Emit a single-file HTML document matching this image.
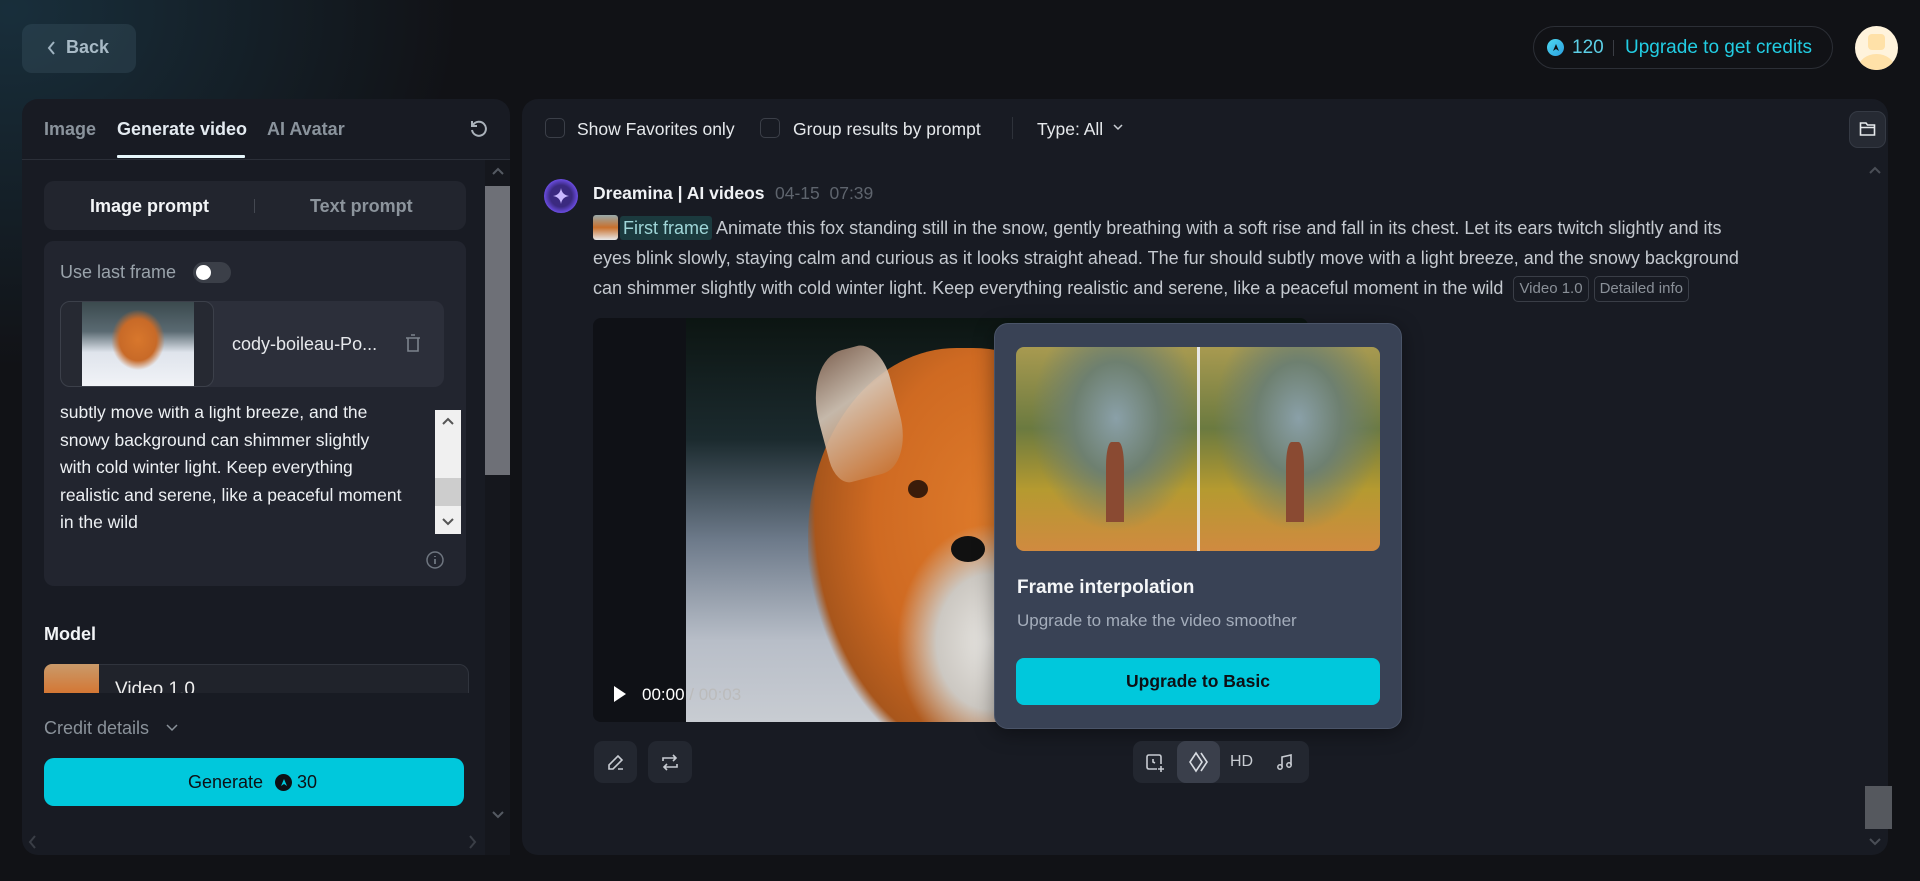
<!DOCTYPE html>
<html><head><meta charset="utf-8"><style>
*{box-sizing:border-box;margin:0;padding:0}
body{width:1920px;height:881px;overflow:hidden;background:#111216;font-family:"Liberation Sans",sans-serif;color:#e8eaee;position:relative}
.a{position:absolute}
.glow{left:-200px;top:-200px;width:700px;height:600px;background:radial-gradient(ellipse at 30% 35%,rgba(30,70,90,.55),rgba(17,18,22,0) 65%)}
.t{white-space:nowrap}
</style></head><body>
<div class="a glow"></div>
<!-- Back -->
<div class="a" style="left:22px;top:24px;width:114px;height:49px;border-radius:10px;background:rgba(60,85,100,.35)"></div>
<svg class="a" style="left:46px;top:40px" width="12" height="16" viewBox="0 0 12 16"><path d="M8 2 L3 8 L8 14" fill="none" stroke="#9fb3c0" stroke-width="2"/></svg>
<div class="a t" style="left:66px;top:37px;font-size:18px;color:#a8bac6;font-weight:bold">Back</div>

<!-- credits pill -->
<div class="a" style="left:1533px;top:26px;width:300px;height:43px;border:1px solid #2c2f36;border-radius:22px"></div>
<div class="a" style="left:1547px;top:39px;width:17px;height:17px;border-radius:50%;background:linear-gradient(135deg,#4fd9f0,#2a9fe0)"></div>
<svg class="a" style="left:1550px;top:42px" width="11" height="11"><path d="M3 9 L6 2 L9 9 L6 7Z" fill="#111"/></svg>
<div class="a t" style="left:1572px;top:37px;font-size:19px;color:#5ccfe6">120</div>
<div class="a" style="left:1613px;top:40px;width:1px;height:16px;background:#3a3d44"></div>
<div class="a t" style="left:1625px;top:37px;font-size:19px;color:#22cde3">Upgrade to get credits</div>
<div class="a" style="left:1855px;top:26px;width:43px;height:44px;border-radius:50%;background:#fff3dc;overflow:hidden">
 <div class="a" style="left:13px;top:8px;width:17px;height:16px;border-radius:4px;background:#ffe1a8"></div>
 <div class="a" style="left:3px;top:28px;width:37px;height:30px;border-radius:50%;background:#ffe1a8"></div>
</div>

<!-- LEFT PANEL -->
<div class="a" style="left:22px;top:99px;width:488px;height:756px;border-radius:16px;background:#181b23;overflow:hidden">
 <div class="a" style="left:0;top:60px;width:488px;height:1px;background:#2b2f38"></div>
</div>
<div class="a t" style="left:44px;top:119px;font-size:18px;color:#8a939c;font-weight:bold">Image</div>
<div class="a t" style="left:117px;top:119px;font-size:18px;color:#e3eaf0;font-weight:bold">Generate video</div>
<div class="a" style="left:117px;top:155px;width:128px;height:3px;background:#e6f6fb;border-radius:1px"></div>
<div class="a t" style="left:267px;top:119px;font-size:18px;color:#8a939c;font-weight:bold">AI Avatar</div>
<svg class="a" style="left:469px;top:119px" width="20" height="20" viewBox="0 0 20 20"><path d="M4 6 A7 7 0 1 1 3 11" fill="none" stroke="#aab2ba" stroke-width="2"/><path d="M3 2 V7 H8" fill="none" stroke="#aab2ba" stroke-width="2"/></svg>
<!-- scrollbar -->
<div class="a" style="left:485px;top:160px;width:25px;height:695px;background:#15171d"></div>
<svg class="a" style="left:491px;top:166px" width="14" height="10"><path d="M2 8 L7 3 L12 8" fill="none" stroke="#555a62" stroke-width="2"/></svg>
<div class="a" style="left:485px;top:186px;width:25px;height:289px;background:#6e7077"></div>
<svg class="a" style="left:491px;top:810px" width="14" height="10"><path d="M2 2 L7 7 L12 2" fill="none" stroke="#555a62" stroke-width="2"/></svg>

<div class="a" style="left:44px;top:181px;width:422px;height:49px;border-radius:10px;background:#22252e"></div>
<div class="a t" style="left:90px;top:196px;font-size:18px;color:#f2f4f6;font-weight:bold">Image prompt</div>
<div class="a" style="left:254px;top:199px;width:1px;height:14px;background:#444851"></div>
<div class="a t" style="left:310px;top:196px;font-size:18px;color:#8c949c;font-weight:bold">Text prompt</div>

<div class="a" style="left:44px;top:241px;width:422px;height:345px;border-radius:10px;background:#22252f;overflow:hidden">
 <div class="a" style="left:16px;top:158px;width:380px;font-size:17.5px;line-height:27.5px;color:#edf0f3;white-space:nowrap">subtly move with a light breeze, and the<br>snowy background can shimmer slightly<br>with cold winter light. Keep everything<br>realistic and serene, like a peaceful moment<br>in the wild</div>
 <div class="a" style="left:0;top:0;width:422px;height:165px;background:#22252f"></div>
 <div class="a t" style="left:16px;top:21px;font-size:18px;color:#9aa3ab">Use last frame</div>
 <div class="a" style="left:149px;top:21px;width:38px;height:21px;border-radius:11px;background:#3b3f48"></div>
 <div class="a" style="left:152px;top:24px;width:15px;height:15px;border-radius:50%;background:#fff"></div>
 <div class="a" style="left:16px;top:60px;width:384px;height:86px;border-radius:10px;background:#2c2f3a"></div>
 <div class="a" style="left:16px;top:60px;width:154px;height:86px;border-radius:10px;background:#262932;border:1px solid #3c404a"></div>
 <div class="a" style="left:38px;top:61px;width:112px;height:84px;background:radial-gradient(ellipse 30% 45% at 50% 45%,#d8772c 0,#c86a28 55%,rgba(0,0,0,0) 80%),linear-gradient(180deg,#3b4a4e 0,#5a6a72 35%,#dfe4ec 60%,#f1f3f7 100%)"></div>
 <div class="a t" style="left:188px;top:93px;font-size:18px;color:#e6e8ec">cody-boileau-Po...</div>
 <svg class="a" style="left:361px;top:93px" width="16" height="19" viewBox="0 0 16 19"><path d="M1 4 H15 M6 1 H10 M3 4 V17 H13 V4" fill="none" stroke="#7c838c" stroke-width="1.6"/></svg>
 <div class="a" style="left:391px;top:169px;width:26px;height:124px;background:#f0f0f0"></div>
 <div class="a" style="left:391px;top:237px;width:26px;height:28px;background:#cdcdcd"></div>
 <svg class="a" style="left:396px;top:174px" width="16" height="12"><path d="M3 9 L8 4 L13 9" fill="none" stroke="#555" stroke-width="2"/></svg>
 <svg class="a" style="left:396px;top:275px" width="16" height="12"><path d="M3 3 L8 8 L13 3" fill="none" stroke="#555" stroke-width="2"/></svg>
 <svg class="a" style="left:381px;top:309px" width="20" height="20" viewBox="0 0 20 20"><circle cx="10" cy="10" r="8" fill="none" stroke="#6f7680" stroke-width="1.5"/><path d="M10 9 V14 M10 6 V7" stroke="#6f7680" stroke-width="1.8"/></svg>
</div>
<div class="a t" style="left:44px;top:624px;font-size:18px;color:#f2f4f6;font-weight:bold">Model</div>
<div class="a" style="left:44px;top:664px;width:425px;height:29px;overflow:hidden">
 <div class="a" style="left:0;top:0;width:425px;height:50px;border:1px solid #30343d;border-radius:10px;background:#20232b"></div>
 <div class="a" style="left:0;top:0;width:55px;height:40px;border-radius:8px 0 0 0;background:linear-gradient(180deg,#c99a6a,#d86a20)"></div>
 <div class="a t" style="left:71px;top:15px;font-size:19px;color:#eee">Video 1.0</div>
</div>
<div class="a t" style="left:44px;top:718px;font-size:18px;color:#8a929a">Credit details</div>
<svg class="a" style="left:164px;top:722px" width="16" height="12"><path d="M3 3 L8 8 L13 3" fill="none" stroke="#8a929a" stroke-width="1.5"/></svg>
<div class="a" style="left:44px;top:758px;width:420px;height:48px;border-radius:10px;background:#00c8dc"></div>
<div class="a t" style="left:188px;top:772px;font-size:18px;color:#0d1015">Generate</div>
<div class="a" style="left:275px;top:774px;width:17px;height:17px;border-radius:50%;background:#0d1015"></div>
<svg class="a" style="left:278px;top:777px" width="11" height="11"><path d="M3 9 L6 2 L9 9 L6 7Z" fill="#00c8dc"/></svg>
<div class="a t" style="left:297px;top:772px;font-size:18px;color:#0d1015">30</div>
<svg class="a" style="left:27px;top:834px" width="12" height="16"><path d="M8 2 L3 8 L8 14" fill="none" stroke="#3a3e46" stroke-width="2"/></svg>
<svg class="a" style="left:466px;top:834px" width="12" height="16"><path d="M4 2 L9 8 L4 14" fill="none" stroke="#3a3e46" stroke-width="2"/></svg>

<!-- RIGHT PANEL -->
<div class="a" style="left:522px;top:99px;width:1366px;height:756px;border-radius:16px;background:#181b23"></div>
<div class="a" style="left:545px;top:118px;width:20px;height:20px;border:1.5px solid #3b3f48;border-radius:5px"></div>
<div class="a t" style="left:577px;top:119px;font-size:17.5px;color:#e6e9ec">Show Favorites only</div>
<div class="a" style="left:760px;top:118px;width:20px;height:20px;border:1.5px solid #3b3f48;border-radius:5px"></div>
<div class="a t" style="left:793px;top:119px;font-size:17.5px;color:#e6e9ec">Group results by prompt</div>
<div class="a" style="left:1012px;top:117px;width:1px;height:22px;background:#2e323a"></div>
<div class="a t" style="left:1037px;top:119px;font-size:17.5px;color:#e6e9ec">Type: All</div>
<svg class="a" style="left:1111px;top:123px" width="14" height="10"><path d="M3 2 L7 6 L11 2" fill="none" stroke="#c8ccd2" stroke-width="1.5"/></svg>
<div class="a" style="left:1849px;top:111px;width:37px;height:37px;border-radius:9px;background:#262a33;border:1px solid #353a44"></div>
<svg class="a" style="left:1859px;top:121px" width="17" height="16" viewBox="0 0 17 16"><path d="M1.5 2 H7 L8.5 4 H15.5 V14 H1.5Z M1.5 6.5 H15.5" fill="none" stroke="#e6e9ec" stroke-width="1.6"/></svg>
<svg class="a" style="left:1867px;top:164px" width="16" height="12"><path d="M3 9 L8 4 L13 9" fill="none" stroke="#4a4e56" stroke-width="2"/></svg>
<div class="a" style="left:1865px;top:786px;width:27px;height:43px;background:#55585e"></div>
<svg class="a" style="left:1867px;top:836px" width="16" height="12"><path d="M3 3 L8 8 L13 3" fill="none" stroke="#4a4e56" stroke-width="2"/></svg>

<!-- message -->
<div class="a" style="left:544px;top:179px;width:34px;height:34px;border-radius:50%;background:radial-gradient(circle,#3b2a80 45%,#6a4ce0 70%,#4a2fb0 100%)"></div>
<svg class="a" style="left:552px;top:187px" width="18" height="18" viewBox="0 0 18 18"><path d="M9 1 Q10 8 17 9 Q10 10 9 17 Q8 10 1 9 Q8 8 9 1Z" fill="#c9b8ff"/></svg>
<div class="a t" style="left:593px;top:183px;font-size:17.5px;color:#f0f2f5;font-weight:bold">Dreamina | AI videos</div>
<div class="a t" style="left:775px;top:183px;font-size:17.5px;color:#5e646d">04-15&nbsp;&nbsp;07:39</div>
<div class="a" style="left:593px;top:213px;width:1200px;font-size:18px;line-height:30px;color:#c4c9cf;white-space:nowrap">
<span style="display:inline-block;width:25px;height:25px;vertical-align:-6px;border-radius:3px;background:linear-gradient(180deg,#9aa 0,#c9702c 50%,#e8e8ea 100%)"></span><span style="background:#1b3a3e;color:#9fd6d8;padding:2px 3px;border-radius:3px;margin-left:2px">First frame</span> Animate this fox standing still in the snow, gently breathing with a soft rise and fall in its chest. Let its ears twitch slightly and its<br>eyes blink slowly, staying calm and curious as it looks straight ahead. The fur should subtly move with a light breeze, and the snowy background<br>can shimmer slightly with cold winter light. Keep everything realistic and serene, like a peaceful moment in the wild&nbsp;
<span style="display:inline-block;font-size:15px;line-height:24px;padding:0 5px;border:1px solid #3a3e47;border-radius:5px;color:#8a9098;vertical-align:1px">Video 1.0</span>
<span style="display:inline-block;font-size:15px;line-height:24px;padding:0 5px;border:1px solid #3a3e47;border-radius:5px;color:#8a9098;vertical-align:1px">Detailed info</span>
</div>

<!-- video -->
<div class="a" style="left:593px;top:318px;width:715px;height:404px;border-radius:8px;overflow:hidden;background:#0f1116">
 <div class="a" style="left:93px;top:0;width:622px;height:404px;background:linear-gradient(180deg,#0c1512 0,#1b2a2e 30%,#6d7a8a 55%,#b8bec8 80%,#c8ccd2 100%)"></div>
 <div class="a" style="left:215px;top:30px;width:330px;height:420px;border-radius:45% 50% 30% 30%;background:radial-gradient(ellipse 40% 40% at 55% 70%,#e6e4e0 0,#ccc8c2 40%,rgba(0,0,0,0) 70%),radial-gradient(ellipse at 55% 40%,#de7a2a 0,#cf6a22 45%,#a8561c 68%,rgba(0,0,0,0) 72%)"></div>
 <div class="a" style="left:225px;top:30px;width:80px;height:130px;border-radius:50% 30% 40% 20%;background:linear-gradient(160deg,#8a6a58 0,#d8c8b8 40%,#c7702e 100%);transform:rotate(-15deg);opacity:.9"></div>
 <div class="a" style="left:315px;top:162px;width:20px;height:18px;border-radius:50%;background:#3a1c0a"></div>
 <div class="a" style="left:358px;top:218px;width:34px;height:26px;border-radius:50%;background:#111"></div>
 <svg class="a" style="left:19px;top:366px" width="16" height="20"><path d="M2 2 L14 10 L2 18Z" fill="#fff"/></svg>
 <div class="a t" style="left:49px;top:367px;font-size:17px;color:#fff">00:00 <span style="color:#bbb">/ 00:03</span></div>
</div>

<!-- popup -->
<div class="a" style="left:994px;top:323px;width:408px;height:406px;border-radius:14px;background:#394255;border:1px solid #4a5468;box-shadow:0 4px 20px rgba(0,0,0,.4)"></div>
<div class="a" style="left:1016px;top:347px;width:364px;height:204px;border-radius:8px;overflow:hidden">
 <div class="a" style="left:0;top:0;width:182px;height:204px;background:radial-gradient(ellipse at 55% 35%,#8aa0a8 0,#6e8070 30%,rgba(0,0,0,0) 60%),linear-gradient(180deg,#a89a50 0,#6b7a40 40%,#b59a30 70%,#d08a40 100%)"></div>
 <div class="a" style="left:183px;top:0;width:181px;height:204px;background:radial-gradient(ellipse at 55% 35%,#8aa0a8 0,#6e8070 30%,rgba(0,0,0,0) 60%),linear-gradient(180deg,#a89a50 0,#6b7a40 40%,#b59a30 70%,#d08a40 100%)"></div>
 <div class="a" style="left:181px;top:0;width:3px;height:204px;background:#e8e8e8"></div>
 <div class="a" style="left:90px;top:95px;width:18px;height:80px;background:#8a4a32;border-radius:30% 30% 0 0"></div>
 <div class="a" style="left:270px;top:95px;width:18px;height:80px;background:#8a4a32;border-radius:30% 30% 0 0"></div>
</div>
<div class="a t" style="left:1017px;top:577px;font-size:19px;color:#f4f6f8;font-weight:bold">Frame interpolation</div>
<div class="a t" style="left:1017px;top:611px;font-size:17px;color:#a4adbb">Upgrade to make the video smoother</div>
<div class="a" style="left:1016px;top:658px;width:364px;height:47px;border-radius:8px;background:#00c8dc"></div>
<div class="a t" style="left:1016px;top:671px;width:364px;text-align:center;font-size:17.5px;color:#0d1015;font-weight:bold">Upgrade to Basic</div>

<!-- tool buttons -->
<div class="a" style="left:594px;top:741px;width:43px;height:42px;border-radius:9px;background:#232730"></div>
<svg class="a" style="left:605px;top:752px" width="21" height="21" viewBox="0 0 21 21"><path d="M4 17 L4 13 L13 4 L17 8 L8 17Z M13 17 H18" fill="none" stroke="#c8ccd2" stroke-width="1.6"/></svg>
<div class="a" style="left:648px;top:741px;width:44px;height:42px;border-radius:9px;background:#232730"></div>
<svg class="a" style="left:659px;top:752px" width="22" height="21" viewBox="0 0 22 21"><path d="M4 9 V6 H17 M14 3 L17 6 L14 9 M18 12 V15 H5 M8 12 L5 15 L8 18" fill="none" stroke="#c8ccd2" stroke-width="1.6"/></svg>
<div class="a" style="left:1133px;top:741px;width:176px;height:42px;border-radius:9px;background:#232730"></div>
<div class="a" style="left:1177px;top:741px;width:43px;height:42px;border-radius:9px;background:#3a3f4b"></div>
<svg class="a" style="left:1144px;top:752px" width="22" height="22" viewBox="0 0 22 22"><path d="M13 17 H5 Q3 17 3 15 V5 Q3 3 5 3 H15 Q17 3 17 5 V12 M9 7 V10 L11 11 M17 14 V20 M14 17 H20" fill="none" stroke="#c8ccd2" stroke-width="1.6"/></svg>
<svg class="a" style="left:1187px;top:751px" width="24" height="22" viewBox="0 0 24 22"><path d="M9 2 L3 11 L9 20 L15 11Z M14 2 L20 11 L14 20" fill="none" stroke="#d8dce2" stroke-width="1.6"/></svg>
<div class="a t" style="left:1230px;top:753px;font-size:16px;color:#c8ccd2">HD</div>
<svg class="a" style="left:1275px;top:752px" width="20" height="20" viewBox="0 0 20 20"><path d="M7 15 V5 L16 3 V13" fill="none" stroke="#c8ccd2" stroke-width="1.6"/><circle cx="5" cy="15" r="2.2" fill="none" stroke="#c8ccd2" stroke-width="1.5"/><circle cx="14" cy="13" r="2.2" fill="none" stroke="#c8ccd2" stroke-width="1.5"/></svg>
</body></html>
